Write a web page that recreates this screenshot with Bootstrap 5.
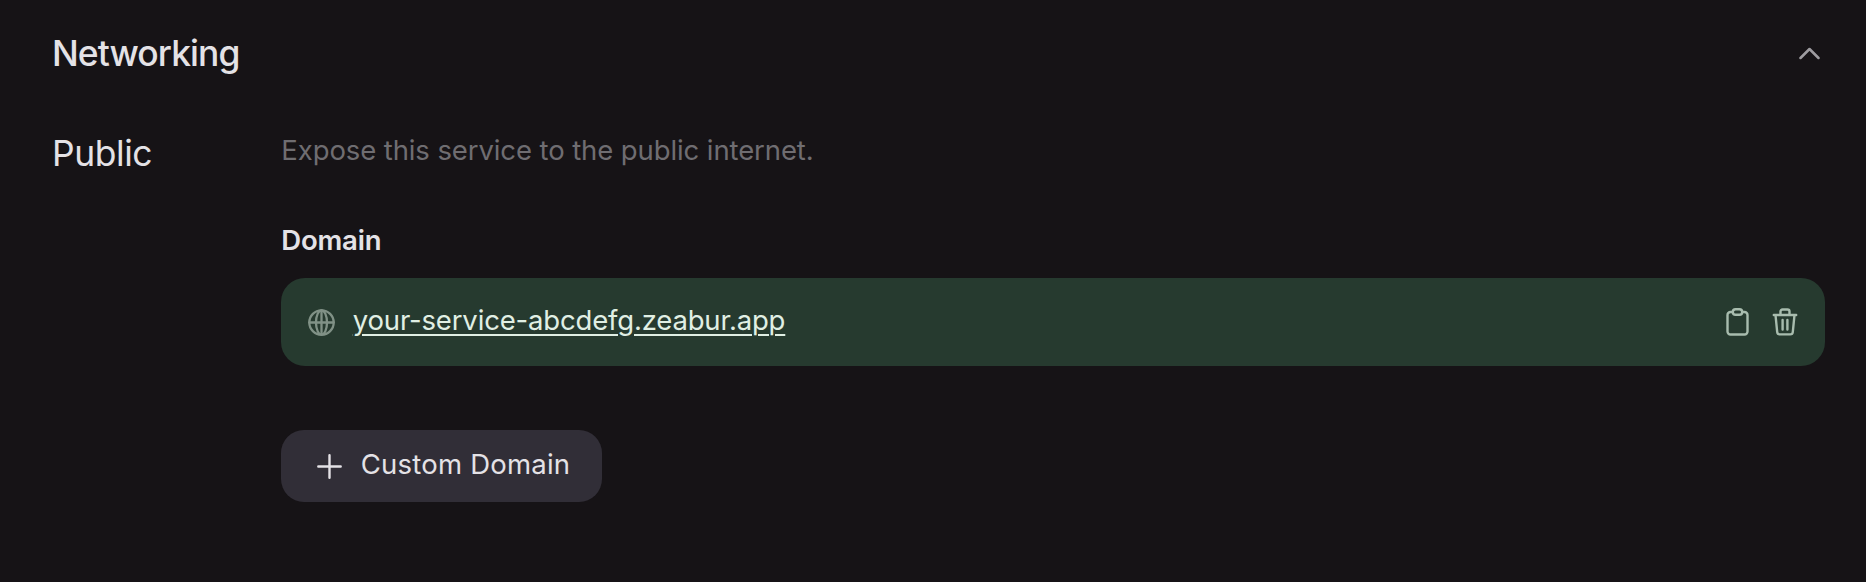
<!DOCTYPE html>
<html lang="en" data-bs-theme="dark">
<head>
<meta charset="utf-8">
<meta name="viewport" content="width=device-width, initial-scale=1">
<title>Networking</title>
<link href="https://cdn.jsdelivr.net/npm/bootstrap@5.3.0/dist/css/bootstrap.min.css" rel="stylesheet">
<style>
body{background:#161316;color:#e4e2e6;font-family:Inter,"Liberation Sans",sans-serif;font-size:27.5px;line-height:40px;min-height:582px}
svg{display:block;flex:none;fill:none;stroke:currentColor;stroke-linecap:round;stroke-linejoin:round}
.panel{padding:34px 41px 0 52px}
.section-title,.row-title{font-size:35.4px;line-height:40px;color:#e4e2e6}
.section-title{font-weight:550;letter-spacing:-.9px}
.row-title{font-weight:400;width:229.3px;padding-top:4px;letter-spacing:-.4px}
.section-body{margin-top:56px}
.chevron{color:#9e9ca0;margin:-2px 5px 0 0}
.hint{color:#6f6d71;letter-spacing:-.1px}
.field-label{font-weight:600;margin-top:50px;margin-bottom:18px;letter-spacing:-.2px}
.domain{height:88px;background:#263a2f;border-radius:24px;padding:0 27px 0 26.5px}
.domain a{color:#e0efe4;text-decoration-thickness:2px;text-underline-offset:4px;letter-spacing:-.17px;margin:-5px 0 0 18px}
.globe{color:#809186}
.tool{color:#a8bcae}
.tools{gap:23px}
.btn-add{--bs-btn-color:#e4e2e6;--bs-btn-bg:#312e37;--bs-btn-hover-bg:#3b3842;--bs-btn-hover-color:#fff;width:321px;height:72px;border:0;border-radius:23px;font-size:27.5px;line-height:40px;padding:0 0 0 35.5px;margin-top:64px}
.btn-add span{margin:-5px 0 0 19px;letter-spacing:.22px}
</style>
</head>
<body>
<main class="panel">
  <header class="d-flex align-items-center justify-content-between">
    <h1 class="section-title mb-0">Networking</h1>
    <svg class="chevron" width="21" height="13" viewBox="0 0 21 13" stroke-width="2.5"><path d="M1.500 11 10.500 2l9 9"/></svg>
  </header>
  <section class="section-body d-flex">
    <h2 class="row-title flex-shrink-0 mb-0">Public</h2>
    <div class="flex-grow-1">
      <p class="hint mb-0">Expose this service to the public internet.</p>
      <div class="field-label">Domain</div>
      <div class="domain d-flex align-items-center">
        <svg class="globe" width="27" height="27" viewBox="0 0 27 27" stroke-width="2.300"><circle cx="13.500" cy="13.500" r="12.200"/><ellipse cx="13.500" cy="13.500" rx="5.500" ry="12.200"/><path d="M1.300 13.500h24.400M13.500 1.300v24.400"/></svg>
        <a href="#">your-service-abcdefg.zeabur.app</a>
        <div class="tools d-flex ms-auto">
          <svg class="tool" width="23" height="28" viewBox="0 0 23 28" stroke-width="2.400"><path d="M6.500 4H4.500a3 3 0 0 0-3 3v16.500a3 3 0 0 0 3 3h14a3 3 0 0 0 3-3V7a3 3 0 0 0-3-3h-2"/><rect x="6.800" y="1.300" width="9.400" height="5.400" rx="2.700"/></svg>
          <svg class="tool" width="26" height="28" viewBox="0 0 26 28" stroke-width="2.400"><path d="M1.800 7h22.400M8.500 7V3.500a2 2 0 0 1 2-2h5a2 2 0 0 1 2 2V7M3.500 7l1.700 17a2.600 2.600 0 0 0 2.600 2.400h10.400a2.600 2.600 0 0 0 2.600-2.400L22.500 7M10.600 12v9.500M15.400 12v9.500"/></svg>
        </div>
      </div>
      <button type="button" class="btn btn-add d-flex align-items-center">
        <svg width="25" height="25" viewBox="0 0 25 25" stroke-width="2.400"><path d="M12.500 1.300v22.400M1.300 12.500h22.400"/></svg>
        <span>Custom Domain</span>
      </button>
    </div>
  </section>
</main>
<script src="https://cdn.jsdelivr.net/npm/bootstrap@5.3.0/dist/js/bootstrap.bundle.min.js"></script>
</body>
</html>
